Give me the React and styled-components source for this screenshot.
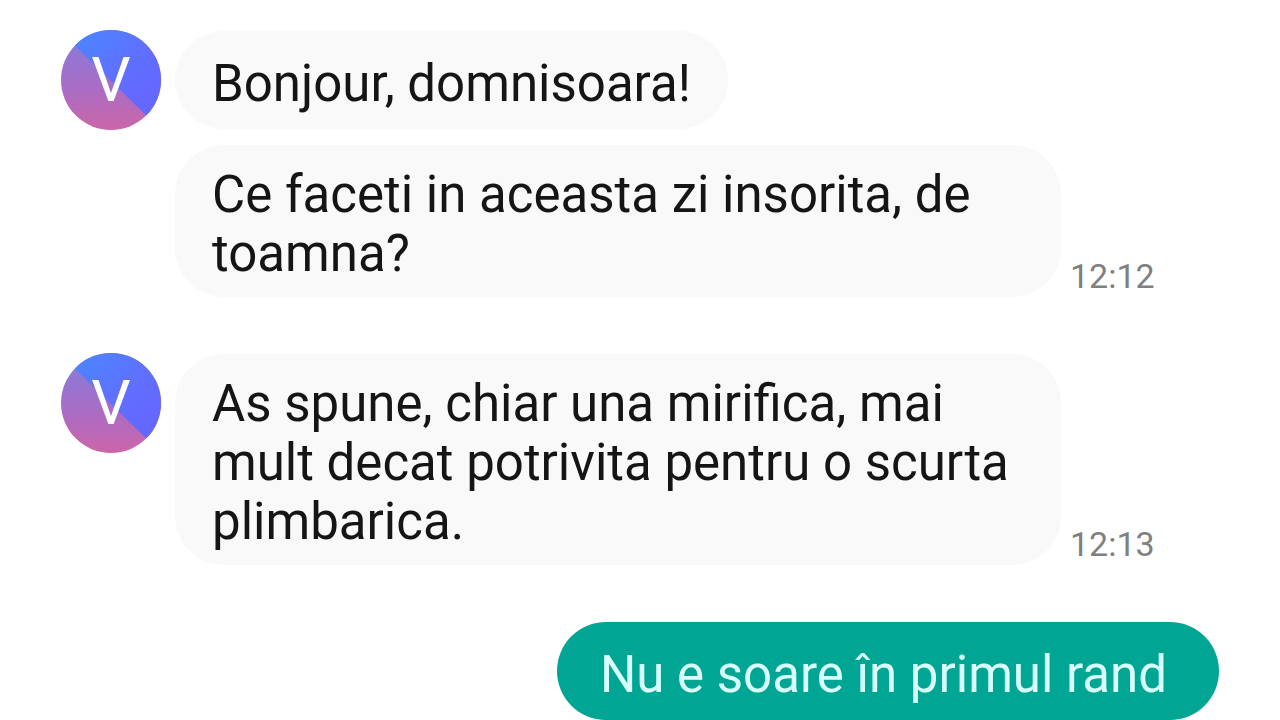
import React from 'react';
import styled, { createGlobalStyle } from 'styled-components';

const GlobalStyle = createGlobalStyle`
  * {
    box-sizing: border-box;
  }

  body {
    margin: 0;
    background: #ffffff;
    font-family: Roboto, 'Liberation Sans', sans-serif;
    overflow: hidden;
  }
`;

const Conversation = styled.main`
  display: flex;
  flex-direction: column;
  gap: 57px;
  padding: 31px 61px 0;
`;

const Group = styled.section`
  display: flex;
  align-items: flex-start;
  gap: 14px;
  justify-content: ${props => (props.$own ? 'flex-end' : 'flex-start')};
`;

const Avatar = styled.svg`
  flex: none;
  width: 100px;
  height: 100px;
  margin-top: -1px;
`;

const Messages = styled.div`
  flex: 1;
  display: flex;
  flex-direction: column;
  gap: 16px;
`;

const Row = styled.div`
  display: flex;
  align-items: flex-end;
  gap: 9px;
`;

const Bubble = styled.p`
  display: flex;
  align-items: center;
  margin: 0;
  max-width: 886px;
  min-height: 98px;
  padding: ${props => (props.$own ? '20px 52px 14px 43px' : '20px 37px 14px')};
  border-radius: 49px;
  background: ${props => (props.$own ? '#00a693' : '#f9f9f9')};
  color: ${props => (props.$own ? '#d8fffb' : '#151515')};
  font-size: 51px;
  line-height: 59px;
`;

const Time = styled.time`
  flex: none;
  color: #808080;
  font-size: 34px;
  line-height: 42px;
`;

const groups = [
  {
    id: 1,
    messages: [
      { text: 'Bonjour, domnisoara!' },
      { text: 'Ce faceti in aceasta zi insorita, de toamna?', time: '12:12' },
    ],
  },
  {
    id: 2,
    messages: [
      {
        text: 'As spune, chiar una mirifica, mai mult decat potrivita pentru o scurta plimbarica.',
        time: '12:13',
      },
    ],
  },
];

// Round contact picture with the sender's initial
function ContactAvatar({ id }) {
  return (
    <Avatar viewBox="0 0 100 100" role="img" aria-label="V">
      <defs>
        <linearGradient id={`warm-${id}`} x1="0" y1="0" x2="0" y2="1">
          <stop offset="0.2" stopColor="#8f78d4" />
          <stop offset="0.6" stopColor="#ab6cc4" />
          <stop offset="1" stopColor="#cc66a8" />
        </linearGradient>
        <linearGradient id={`cool-${id}`} x1="0.2" y1="0" x2="0.8" y2="0.7">
          <stop offset="0" stopColor="#4a86ff" />
          <stop offset="0.6" stopColor="#5f70ff" />
          <stop offset="1" stopColor="#6568ff" />
        </linearGradient>
        <clipPath id={`round-${id}`}>
          <circle cx="50" cy="50" r="50" />
        </clipPath>
      </defs>
      <g clipPath={`url(#round-${id})`}>
        <rect width="100" height="100" fill={`url(#warm-${id})`} />
        <path d="M0 2V0H100V100Z" fill={`url(#cool-${id})`} />
      </g>
      <text x="50" y="71" textAnchor="middle" fill="#ffffff" fontSize="62">
        V
      </text>
    </Avatar>
  );
}

export default function App() {
  return (
    <>
      <GlobalStyle />
      <Conversation>
        {groups.map(group => (
          <Group key={group.id}>
            <ContactAvatar id={group.id} />
            <Messages>
              {group.messages.map(message => (
                <Row key={message.text}>
                  <Bubble>{message.text}</Bubble>
                  {message.time && <Time>{message.time}</Time>}
                </Row>
              ))}
            </Messages>
          </Group>
        ))}
        <Group $own>
          <Bubble $own>Nu e soare în primul rand</Bubble>
        </Group>
      </Conversation>
    </>
  );
}
